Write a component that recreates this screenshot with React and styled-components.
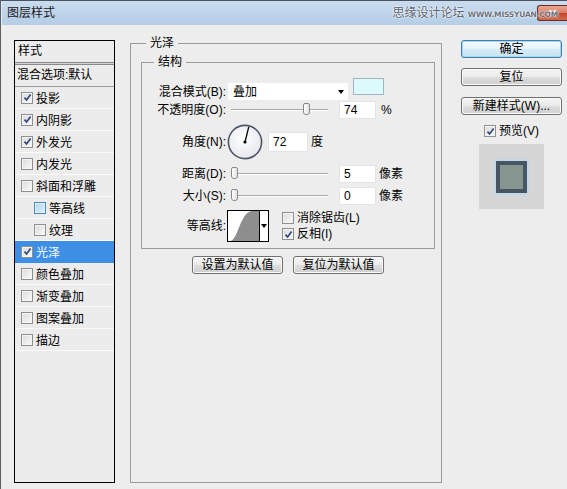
import React from "react";
import styled, { createGlobalStyle } from "styled-components";

const GlobalStyle = createGlobalStyle`
  html, body { margin: 0; padding: 0; background: #ededed; }
  body {
    font-family: "Liberation Sans", "Noto Sans CJK SC", sans-serif;
    font-size: 12px;
    color: #000;
  }
`;

const styleItems = [
  { label: "投影", checked: true },
  { label: "内阴影", checked: true },
  { label: "外发光", checked: true },
  { label: "内发光" },
  { label: "斜面和浮雕" },
  { label: "等高线", indent: true, hot: true },
  { label: "纹理", indent: true },
  { label: "光泽", checked: true, selected: true },
  { label: "颜色叠加" },
  { label: "渐变叠加" },
  { label: "图案叠加" },
  { label: "描边" },
];

const CheckBox = ({ checked, hot }) => (
  <Box $hot={hot}>
    {checked && (
      <svg width="9" height="9" viewBox="0 0 9 9">
        <path d="M1.5 4.6 L3.6 7 L7.6 1.6" fill="none" stroke="#30477a" strokeWidth="1.7" />
      </svg>
    )}
  </Box>
);

const Slider = ({ value }) => (
  <Track>
    <Thumb style={{ left: `${value}%` }} />
  </Track>
);

const Dial = ({ angle }) => {
  const r = (angle * Math.PI) / 180;
  return (
    <DialWrap>
      <svg width="36" height="36" viewBox="0 0 36 36">
        <defs>
          <radialGradient id="dialFill" cx="45%" cy="40%" r="65%">
            <stop offset="0" stopColor="#ffffff" />
            <stop offset="1" stopColor="#e3e6ec" />
          </radialGradient>
        </defs>
        <circle cx="18" cy="18" r="16.6" fill="url(#dialFill)" stroke="#4d5667" strokeWidth="1.6" />
        <line
          x1="18"
          y1="18"
          x2={18 + 15.5 * Math.cos(r)}
          y2={18 - 15.5 * Math.sin(r)}
          stroke="#000"
          strokeWidth="1.3"
        />
        <circle cx="18" cy="18" r="1.6" fill="#000" />
      </svg>
    </DialWrap>
  );
};

const App = () => {
  return (
    <>
      <GlobalStyle />
      <Window>
        <TitleBar>
          <Title>图层样式</Title>
          <Watermark>
            思缘设计论坛 <small>WWW.MISSYUAN.COM</small>
          </Watermark>
          <CloseButton>✕</CloseButton>
        </TitleBar>

        <Body>
          <StyleList>
            <ListHeader>样式</ListHeader>
            <ListDivider />
            <BlendRow>混合选项:默认</BlendRow>
            {styleItems.map((item) => (
              <ListItem key={item.label} $indent={item.indent} $selected={item.selected}>
                <CheckBox checked={item.checked} hot={item.hot} />
                <span>{item.label}</span>
              </ListItem>
            ))}
          </StyleList>

          <Group>
            <GroupTitle $indent={5}>光泽</GroupTitle>
            <InnerGroup>
              <GroupTitle $indent={12}>结构</GroupTitle>

              <Row $h={17} $mt={0}>
                <Label>混合模式(B):</Label>
                <Select>
                  <span>叠加</span>
                  <Arrow />
                </Select>
                <Swatch />
              </Row>

              <Row $h={18} $mt={1}>
                <Label>不透明度(O):</Label>
                <Slider value={74} />
                <NumberBox>74</NumberBox>
                <Unit $ml={5}>%</Unit>
              </Row>

              <Row $h={36} $mt={5}>
                <Label>角度(N):</Label>
                <Dial angle={76} />
                <NumberBox $w={40} $h={20} $ml={5}>
                  72
                </NumberBox>
                <Unit $ml={3}>度</Unit>
              </Row>

              <Row $h={18} $mt={5}>
                <Label>距离(D):</Label>
                <Slider value={0} />
                <NumberBox>5</NumberBox>
                <Unit $ml={3}>像素</Unit>
              </Row>

              <Row $h={18} $mt={4}>
                <Label>大小(S):</Label>
                <Slider value={0} />
                <NumberBox>0</NumberBox>
                <Unit $ml={3}>像素</Unit>
              </Row>

              <Row $h={32} $mt={5}>
                <Label>等高线:</Label>
                <ContourPicker>
                  <ContourPreview>
                    <svg width="31" height="30" viewBox="0 0 31 30">
                      <path d="M2 30 C 10 30, 12 1, 24 0 L31 0 L31 30 Z" fill="#8e8e8e" />
                    </svg>
                  </ContourPreview>
                  <ContourArrow>
                    <Arrow />
                  </ContourArrow>
                </ContourPicker>
                <Options>
                  <Option>
                    <CheckBox />
                    <span>消除锯齿(L)</span>
                  </Option>
                  <Option>
                    <CheckBox checked />
                    <span>反相(I)</span>
                  </Option>
                </Options>
              </Row>
            </InnerGroup>

            <DefaultsRow>
              <Button $w={91}>设置为默认值</Button>
              <Button $w={91}>复位为默认值</Button>
            </DefaultsRow>
          </Group>

          <Side>
            <Button $w={101} $primary>
              确定
            </Button>
            <Button $w={101} $mt={10}>
              复位
            </Button>
            <Button $w={101} $mt={11}>
              新建样式(W)...
            </Button>
            <PreviewToggle>
              <CheckBox checked />
              <span>预览(V)</span>
            </PreviewToggle>
            <PreviewBox>
              <PreviewSquare />
            </PreviewBox>
          </Side>
        </Body>
      </Window>
    </>
  );
};

//Styled Components
const Window = styled.div`
  width: 567px;
  height: 489px;
  box-sizing: border-box;
  overflow: hidden;
  display: flex;
  flex-direction: column;
  background: #ededed;
  border-left: 1px solid #5a5f66;
  border-top: 1px solid #4a5563;
`;

const TitleBar = styled.div`
  position: relative;
  height: 24px;
  flex: none;
  display: flex;
  align-items: center;
  padding-left: 6px;
  background: linear-gradient(#cbdcef, #bcd2ea 60%, #b6cde7);
  box-shadow: inset 1px 0 0 #e4edf7;
`;

const Title = styled.div`
  font-size: 12px;
  line-height: 14px;
  color: #1a1a1a;
`;

const Watermark = styled.div`
  position: absolute;
  right: 9px;
  top: 4px;
  z-index: 2;
  font-size: 12px;
  line-height: 16px;
  color: #5a6470;
  text-shadow: 0 0 2px #ffffff, 0 0 2px #ffffff;
  white-space: nowrap;

  small {
    font-family: "DejaVu Sans", sans-serif;
    font-size: 7.5px;
    font-weight: bold;
    letter-spacing: -0.2px;
    color: #6a7078;
  }
`;

const CloseButton = styled.div`
  margin-left: auto;
  align-self: flex-start;
  margin-top: 4px;
  width: 30px;
  height: 16px;
  box-sizing: border-box;
  border: 1px solid #6a2c22;
  border-right: none;
  border-radius: 3px 0 0 3px;
  background: linear-gradient(#eaa896, #d97b63 48%, #c8462b 52%, #d06a4d);
  color: #fff;
  font-size: 11px;
  font-weight: bold;
  line-height: 14px;
  text-align: center;
`;

const Body = styled.div`
  flex: 1;
  display: flex;
  align-items: stretch;
  padding: 0 0 6px 13px;
  min-height: 0;
`;

const StyleList = styled.div`
  width: 101px;
  box-sizing: border-box;
  margin-top: 15px;
  border: 1px solid #000;
  display: flex;
  flex-direction: column;
  background: #ececec;
`;

const ListHeader = styled.div`
  height: 21px;
  line-height: 21px;
  padding-left: 3px;
`;

const ListDivider = styled.div`
  height: 1px;
  border-top: 1px solid #8a8a8a;
  border-bottom: 1px solid #8a8a8a;
  background: #d4d4d4;
`;

const BlendRow = styled.div`
  height: 22px;
  box-sizing: border-box;
  line-height: 21px;
  padding-left: 2px;
  border-bottom: 1px solid #9c9c9c;
  white-space: nowrap;
`;

const ListItem = styled.div`
  height: 22px;
  box-sizing: border-box;
  display: flex;
  align-items: center;
  gap: 3px;
  padding-left: ${(p) => (p.$indent ? 19 : 6)}px;
  border-bottom: 1px solid ${(p) => (p.$selected ? "#3d8fe6" : "#fafafa")};
  background: ${(p) => (p.$selected ? "#3d8fe6" : "transparent")};
  color: ${(p) => (p.$selected ? "#fff" : "#000")};
`;

const Box = styled.span`
  width: 12px;
  height: 12px;
  box-sizing: border-box;
  flex: none;
  display: inline-flex;
  align-items: center;
  justify-content: center;
  border: 1px solid ${(p) => (p.$hot ? "#4a86c0" : "#8e8f8f")};
  background: ${(p) =>
    p.$hot
      ? "linear-gradient(135deg, #a9d4f2, #def0fb)"
      : "linear-gradient(135deg, #d9d9d9, #fbfbfb)"};
  box-shadow: inset 0 0 0 1px ${(p) => (p.$hot ? "#e8f4fc" : "#f4f4f4")};
`;

const Group = styled.fieldset`
  width: 312px;
  box-sizing: border-box;
  margin: 11px 0 0 15px;
  padding: 0 6px 0 10px;
  border: 1px solid #9a9a9a;
  min-width: 0;
  display: flex;
  flex-direction: column;
`;

const GroupTitle = styled.legend`
  margin-left: ${(p) => p.$indent}px;
  padding: 0 4px;
  font-size: 12px;
  line-height: 14px;
`;

const InnerGroup = styled.fieldset`
  margin: 5px 0 0 0;
  padding: 14px 0 6px 0;
  border: 1px solid #9a9a9a;
  min-width: 0;
  display: flex;
  flex-direction: column;
`;

const Row = styled.div`
  height: ${(p) => p.$h}px;
  margin-top: ${(p) => p.$mt}px;
  display: flex;
  align-items: center;
`;

const Label = styled.div`
  width: 84px;
  flex: none;
  text-align: right;
  white-space: nowrap;
  line-height: 14px;
`;

const Select = styled.div`
  width: 120px;
  height: 17px;
  margin-left: 2px;
  box-sizing: border-box;
  background: #fff;
  display: flex;
  align-items: center;
  justify-content: space-between;
  padding: 0 4px 0 5px;
  line-height: 14px;
`;

const Arrow = styled.span`
  width: 0;
  height: 0;
  border-left: 3.5px solid transparent;
  border-right: 3.5px solid transparent;
  border-top: 4px solid #000;
`;

const Swatch = styled.div`
  width: 31px;
  height: 17px;
  box-sizing: border-box;
  margin-left: 5px;
  align-self: flex-start;
  margin-top: -5px;
  border: 1px solid #a3b6c0;
  background: #dcfafc;
`;

const Track = styled.div`
  position: relative;
  width: 97px;
  height: 2px;
  margin-left: 5px;
  border-top: 1px solid #a9a9a9;
  border-bottom: 1px solid #ffffff;
  box-sizing: border-box;
`;

const Thumb = styled.span`
  position: absolute;
  top: -7px;
  width: 7px;
  height: 12px;
  box-sizing: border-box;
  border: 1px solid #8a8a8a;
  border-radius: 2px 2px 3px 3px;
  background: linear-gradient(90deg, #ffffff, #e2e2e2);
`;

const NumberBox = styled.div`
  width: ${(p) => p.$w || 37}px;
  height: ${(p) => p.$h || 18}px;
  margin-left: ${(p) => (p.$ml === undefined ? 11 : p.$ml)}px;
  box-sizing: border-box;
  background: #fff;
  border: 1px solid #e4e4e4;
  padding-left: 4px;
  display: flex;
  align-items: center;
  line-height: 14px;
`;

const Unit = styled.span`
  margin-left: ${(p) => p.$ml}px;
  line-height: 14px;
`;

const DialWrap = styled.div`
  width: 36px;
  height: 36px;
  margin-left: 1px;
  flex: none;
`;

const ContourPicker = styled.div`
  width: 42px;
  height: 32px;
  margin-left: 1px;
  box-sizing: border-box;
  border: 1px solid #000;
  display: flex;
`;

const ContourPreview = styled.div`
  width: 31px;
  background: #fff;
  border-right: 1px solid #000;
  display: flex;
  align-items: flex-end;
  overflow: hidden;
`;

const ContourArrow = styled.div`
  flex: 1;
  background: #fff;
  display: flex;
  align-items: center;
  justify-content: center;
`;

const Options = styled.div`
  margin-left: 13px;
  display: flex;
  flex-direction: column;
  gap: 2px;
  align-self: flex-start;
  margin-top: 1px;
`;

const Option = styled.div`
  height: 14px;
  display: flex;
  align-items: center;
  gap: 3px;
  line-height: 14px;
`;

const DefaultsRow = styled.div`
  display: flex;
  justify-content: center;
  gap: 10px;
  margin-top: 7px;
`;

const Button = styled.div`
  width: ${(p) => p.$w}px;
  height: 18px;
  margin-top: ${(p) => p.$mt || 0}px;
  box-sizing: border-box;
  flex: none;
  border: 1px solid ${(p) => (p.$primary ? "#3c7fb1" : "#707070")};
  border-radius: 3px;
  background: ${(p) =>
    p.$primary
      ? "linear-gradient(#f4fafe, #e6f3fb 50%, #d5ebf8 51%, #c6e3f5)"
      : "linear-gradient(#f4f4f4, #ebebeb 50%, #dddddd 51%, #cfcfcf)"};
  box-shadow: inset 0 0 0 1px ${(p) => (p.$primary ? "#a6d6f3" : "#fafafa")};
  display: flex;
  align-items: center;
  justify-content: center;
  line-height: 14px;
  white-space: nowrap;
`;

const Side = styled.div`
  width: 101px;
  margin: 15px 0 0 19px;
  display: flex;
  flex-direction: column;
  align-items: center;
`;

const PreviewToggle = styled.div`
  margin-top: 9px;
  height: 14px;
  display: flex;
  align-items: center;
  gap: 3px;
  line-height: 14px;
`;

const PreviewBox = styled.div`
  width: 65px;
  height: 65px;
  margin-top: 6px;
  background: #d6d6d6;
  display: flex;
  align-items: center;
  justify-content: center;
`;

const PreviewSquare = styled.div`
  width: 31px;
  height: 32px;
  box-sizing: border-box;
  border: 4px solid #485664;
  background: #879590;
  box-shadow: 0 0 3px 1px #b3d8f2;
`;

export default App;
